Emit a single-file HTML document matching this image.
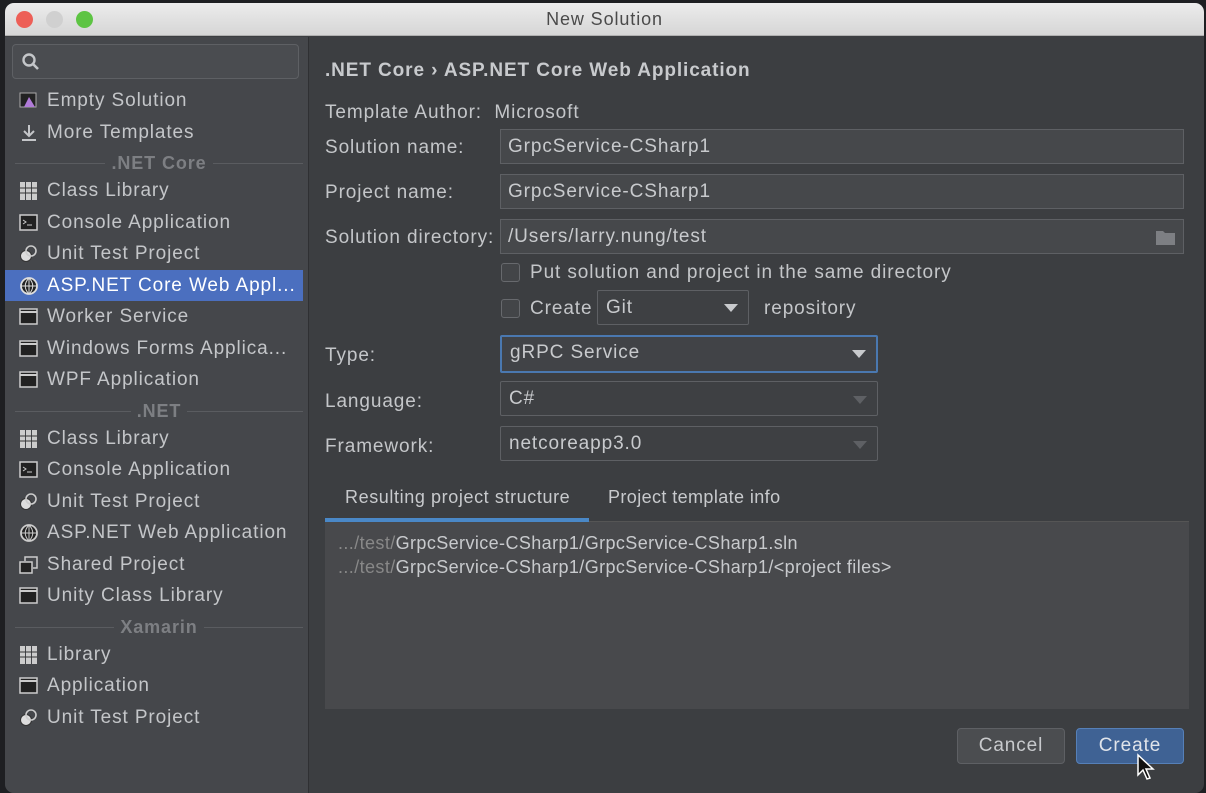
<!DOCTYPE html>
<html><head><meta charset="utf-8"><style>
*{margin:0;padding:0;box-sizing:border-box}
body{width:1206px;height:786px;background:#1e1f22;font-family:"Liberation Sans",sans-serif;position:relative;overflow:hidden;color:#bbbdc0;letter-spacing:0.9px}
.win{position:absolute;left:5px;top:3px;width:1199px;height:790px;border-radius:9px;overflow:hidden;background:#3c3e41}
.title{position:absolute;left:0;top:0;width:100%;height:33px;background:linear-gradient(#ececec,#d6d6d6);border-bottom:1px solid #b0b0b0;text-align:center;font-size:18px;line-height:33px;color:#4a4a4a}
.dot{position:absolute;top:8px;width:17px;height:17px;border-radius:50%}
.side{position:absolute;left:0;top:34px;width:304px;height:760px;background:#45474b;border-right:1px solid #2f3033}
.a{position:absolute;white-space:nowrap}
.it{position:absolute;left:0;width:298px;height:31px;font-size:19px;line-height:31px;padding-left:42px;color:#c4c6c9;white-space:nowrap;overflow:hidden}
.it svg{position:absolute;left:14px;top:6px}
.sel{background:#4b6fbf;color:#fff}
.sec{position:absolute;left:10px;width:288px;height:20px;font-size:18px;font-weight:bold;color:#7d7f83;text-align:center}
.sec:before{content:"";position:absolute;left:0;right:0;top:10px;border-top:1px solid #5a5c60}
.sec span{position:relative;background:#45474b;padding:0 6px}
.lbl{position:absolute;left:320px;font-size:19px;color:#c4c6c9;white-space:nowrap}
.inp{position:absolute;left:495px;width:684px;height:35px;border:1px solid #5e6064;background:#46484b;font-size:19px;line-height:33px;padding-left:7px;color:#c8cacd}
.cb{position:absolute;width:19px;height:19px;border:1px solid #67696d;border-radius:3px;background:#434548}
.dd{position:absolute;left:495px;width:378px;height:35px;border:1px solid #5e6064;background:#3e4043;font-size:19px;line-height:33px;padding-left:8px;color:#c8cacd;border-radius:2px}
.tri{position:absolute;right:10px;top:14px;width:0;height:0;border-left:7px solid transparent;border-right:7px solid transparent;border-top:8px solid #c8cacd}
.btn{position:absolute;top:725px;width:108px;height:36px;border-radius:4px;font-size:19px;line-height:34px;text-align:center}
</style></head><body>
<div class="win">
<div class="title">New Solution
<div class="dot" style="left:11px;background:#ed5f57"></div>
<div class="dot" style="left:41px;background:#d0d0d0"></div>
<div class="dot" style="left:71px;background:#5dc443"></div>
</div>
<div class="side">
<div class="a" style="left:7px;top:7px;width:287px;height:35px;border:1px solid #5e6064;border-radius:4px;background:#4a4c50">
<svg width="20" height="20" style="position:absolute;left:8px;top:7px" viewBox="0 0 20 20"><circle cx="8" cy="8" r="5.5" fill="none" stroke="#c4c6c9" stroke-width="2.4"/><path d="M12 12l5 5" stroke="#c4c6c9" stroke-width="2.6"/></svg></div>
</div>
<div class="it" style="top:82px"><svg width="20" height="20"><rect x="1" y="2" width="16" height="14" fill="#222" stroke="#aaa"/><path d="M10 6l6 10h-11z" fill="#b07bd8"/></svg>Empty Solution</div>
<div class="it" style="top:114px"><svg width="20" height="20"><path d="M10 2v10M5 8l5 5 5-5M3 17h14" stroke="#c4c6c9" stroke-width="2" fill="none"/></svg>More Templates</div>
<div class="sec" style="top:150px"><span>.NET Core</span></div>
<div class="it" style="top:172px"><svg width="20" height="20"><rect x="1" y="1" width="5" height="18" fill="#ccc"/><rect x="7" y="1" width="5" height="18" fill="#ccc"/><rect x="13" y="1" width="5" height="18" fill="#ccc"/><path d="M1 7h17M1 12h17" stroke="#333"/></svg>Class Library</div>
<div class="it" style="top:204px"><svg width="20" height="20"><rect x="1" y="2" width="17" height="15" fill="#222" stroke="#ccc" stroke-width="1.5"/><path d="M4 7l3 2-3 2M8 12h5" stroke="#ccc" fill="none"/></svg>Console Application</div>
<div class="it" style="top:235px"><svg width="20" height="20"><circle cx="7" cy="12" r="5.5" fill="#ddd" stroke="#333"/><circle cx="12" cy="7" r="5" fill="none" stroke="#ccc" stroke-width="1.6"/></svg>Unit Test Project</div>
<div class="it sel" style="top:267px"><svg width="20" height="20"><circle cx="10" cy="10" r="8" fill="#222" stroke="#ddd" stroke-width="1.8"/><path d="M2 10h16M10 2v16M10 2c-5 5-5 11 0 16M10 2c5 5 5 11 0 16" stroke="#ddd" fill="none"/></svg>ASP.NET Core Web Appl...</div>
<div class="it" style="top:298px"><svg width="20" height="20"><rect x="1" y="2" width="17" height="15" fill="#222" stroke="#ccc" stroke-width="1.5"/><path d="M1 5h17" stroke="#ccc" stroke-width="2"/></svg>Worker Service</div>
<div class="it" style="top:330px"><svg width="20" height="20"><rect x="1" y="2" width="17" height="15" fill="#222" stroke="#ccc" stroke-width="1.5"/><path d="M1 5h17" stroke="#ccc" stroke-width="2"/></svg>Windows Forms Applica...</div>
<div class="it" style="top:361px"><svg width="20" height="20"><rect x="1" y="2" width="17" height="15" fill="#222" stroke="#ccc" stroke-width="1.5"/><path d="M1 5h17" stroke="#ccc" stroke-width="2"/></svg>WPF Application</div>
<div class="sec" style="top:398px"><span>.NET</span></div>
<div class="it" style="top:420px"><svg width="20" height="20"><rect x="1" y="1" width="5" height="18" fill="#ccc"/><rect x="7" y="1" width="5" height="18" fill="#ccc"/><rect x="13" y="1" width="5" height="18" fill="#ccc"/><path d="M1 7h17M1 12h17" stroke="#333"/></svg>Class Library</div>
<div class="it" style="top:451px"><svg width="20" height="20"><rect x="1" y="2" width="17" height="15" fill="#222" stroke="#ccc" stroke-width="1.5"/><path d="M4 7l3 2-3 2M8 12h5" stroke="#ccc" fill="none"/></svg>Console Application</div>
<div class="it" style="top:483px"><svg width="20" height="20"><circle cx="7" cy="12" r="5.5" fill="#ddd" stroke="#333"/><circle cx="12" cy="7" r="5" fill="none" stroke="#ccc" stroke-width="1.6"/></svg>Unit Test Project</div>
<div class="it" style="top:514px"><svg width="20" height="20"><circle cx="10" cy="10" r="8" fill="#222" stroke="#ccc" stroke-width="1.8"/><path d="M2 10h16M10 2v16M10 2c-5 5-5 11 0 16M10 2c5 5 5 11 0 16" stroke="#ccc" fill="none"/></svg>ASP.NET Web Application</div>
<div class="it" style="top:546px"><svg width="20" height="20"><rect x="1" y="7" width="12" height="11" fill="#222" stroke="#ccc" stroke-width="1.5"/><path d="M6 6V2h12v11h-4" stroke="#ccc" stroke-width="1.5" fill="none"/></svg>Shared Project</div>
<div class="it" style="top:577px"><svg width="20" height="20"><rect x="1" y="2" width="17" height="15" fill="#222" stroke="#ccc" stroke-width="1.5"/><path d="M1 5h17" stroke="#ccc" stroke-width="2"/></svg>Unity Class Library</div>
<div class="sec" style="top:614px"><span>Xamarin</span></div>
<div class="it" style="top:636px"><svg width="20" height="20"><rect x="1" y="1" width="5" height="18" fill="#ccc"/><rect x="7" y="1" width="5" height="18" fill="#ccc"/><rect x="13" y="1" width="5" height="18" fill="#ccc"/><path d="M1 7h17M1 12h17" stroke="#333"/></svg>Library</div>
<div class="it" style="top:667px"><svg width="20" height="20"><rect x="1" y="2" width="17" height="15" fill="#222" stroke="#ccc" stroke-width="1.5"/><path d="M1 5h17" stroke="#ccc" stroke-width="2"/></svg>Application</div>
<div class="it" style="top:699px"><svg width="20" height="20"><circle cx="7" cy="12" r="5.5" fill="#ddd" stroke="#333"/><circle cx="12" cy="7" r="5" fill="none" stroke="#ccc" stroke-width="1.6"/></svg>Unit Test Project</div>

<div class="a" style="left:320px;top:57px;font-size:19px;font-weight:bold;color:#c8cacd">.NET Core › ASP.NET Core Web Application</div>
<div class="lbl" style="top:99px">Template Author:&nbsp; Microsoft</div>
<div class="lbl" style="top:134px">Solution name:</div>
<div class="inp" style="top:126px">GrpcService-CSharp1</div>
<div class="lbl" style="top:179px">Project name:</div>
<div class="inp" style="top:171px">GrpcService-CSharp1</div>
<div class="lbl" style="top:224px">Solution directory:</div>
<div class="inp" style="top:216px">/Users/larry.nung/test
<svg width="22" height="18" style="position:absolute;right:6px;top:8px"><path d="M1 3h7l2 2h10v12H1z" fill="#7d7f83"/></svg></div>
<div class="cb" style="left:496px;top:260px"></div>
<div class="lbl" style="left:525px;top:259px">Put solution and project in the same directory</div>
<div class="cb" style="left:496px;top:296px"></div>
<div class="lbl" style="left:525px;top:295px">Create</div>
<div class="dd" style="left:592px;top:287px;width:152px">Git<div class="tri" style="top:13px"></div></div>
<div class="lbl" style="left:759px;top:295px">repository</div>
<div class="lbl" style="top:342px">Type:</div>
<div class="dd" style="top:332px;height:38px;border:2px solid #4a78b0;background:#414347;line-height:32px">gRPC Service<div class="tri" style="top:13px"></div></div>
<div class="lbl" style="top:388px">Language:</div>
<div class="dd" style="top:378px">C#<div class="tri" style="border-top-color:#5e6064"></div></div>
<div class="lbl" style="top:433px">Framework:</div>
<div class="dd" style="top:423px">netcoreapp3.0<div class="tri" style="border-top-color:#5e6064"></div></div>
<div class="a" style="left:340px;top:484px;font-size:18px;letter-spacing:0.6px;color:#c8cacd">Resulting project structure</div>
<div class="a" style="left:603px;top:484px;font-size:18px;letter-spacing:0.4px;color:#c8cacd">Project template info</div>
<div class="a" style="left:320px;top:518px;width:864px;height:188px;background:#48494c;border-top:1px solid #555"></div>
<div class="a" style="left:320px;top:515px;width:264px;height:4px;background:#4a88c7"></div>
<div class="a" style="left:333px;top:530px;font-size:18px;letter-spacing:0.4px;color:#c8cacd"><span style="color:#888">.../test/</span>GrpcService-CSharp1/GrpcService-CSharp1.sln</div>
<div class="a" style="left:333px;top:554px;font-size:18px;letter-spacing:0.4px;color:#c8cacd"><span style="color:#888">.../test/</span>GrpcService-CSharp1/GrpcService-CSharp1/&lt;project files&gt;</div>
<div class="btn" style="left:952px;background:#4b4d50;border:1px solid #5e6064;color:#c8cacd">Cancel</div>
<div class="btn" style="left:1071px;background:#3f6294;border:1px solid #5680b8;color:#e0e4ea">Create</div>
<svg class="a" style="left:1131px;top:750px" width="20" height="28"><path d="M2 2v20l5-5 4 9 3-1-4-9h7z" fill="#111" stroke="#fff" stroke-width="1.5"/></svg>
</div>
</body></html>
